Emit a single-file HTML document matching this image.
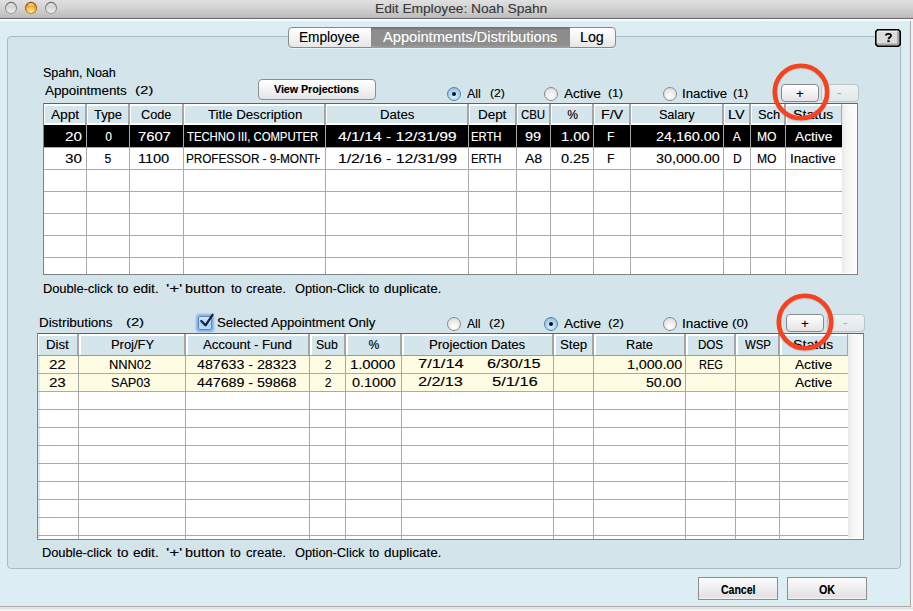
<!DOCTYPE html>
<html><head><meta charset="utf-8"><style>
html,body{margin:0;padding:0}
body{width:913px;height:611px;position:relative;overflow:hidden;background:#f2f2f2;font-family:"Liberation Sans",sans-serif}
.t{position:absolute;white-space:pre;line-height:20px;transform-origin:0 0;font-family:"Liberation Sans",sans-serif}

</style></head><body>
<div style='position:absolute;left:0px;top:0px;width:913px;height:18px;background:linear-gradient(#e0e0e0,#d2d2d2 45%,#c4c4c4 80%,#b9b9b9)'></div>
<div style='position:absolute;left:0px;top:18px;width:913px;height:1px;background:#6a6a6a'></div>
<div style='position:absolute;left:0px;top:19px;width:913px;height:2px;background:#f7fbfc'></div>
<svg style='position:absolute;left:0;top:0' width='62' height='18'>
<defs>
<linearGradient id='gr' x1='0' y1='0' x2='0' y2='1'><stop offset='0' stop-color='#c4c4c4'/><stop offset='0.5' stop-color='#d8d8d8'/><stop offset='1' stop-color='#f2f2f2'/></linearGradient>
<linearGradient id='grr' x1='0' y1='0' x2='0' y2='1'><stop offset='0' stop-color='#6e6e6e'/><stop offset='1' stop-color='#a8a8a8'/></linearGradient>
<radialGradient id='orf' cx='0.5' cy='0.85' r='0.8'><stop offset='0' stop-color='#fff4a8'/><stop offset='0.45' stop-color='#f8c850'/><stop offset='1' stop-color='#e07a18'/></radialGradient>
<linearGradient id='orr' x1='0' y1='0' x2='0' y2='1'><stop offset='0' stop-color='#8c5408'/><stop offset='1' stop-color='#c89028'/></linearGradient>
<linearGradient id='hl' x1='0' y1='0' x2='0' y2='1'><stop offset='0' stop-color='#fff' stop-opacity='0.9'/><stop offset='1' stop-color='#fff' stop-opacity='0'/></linearGradient>
</defs>
<circle cx='11' cy='8' r='5.6' fill='url(#gr)' stroke='url(#grr)' stroke-width='1.1'/>
<ellipse cx='11' cy='5.2' rx='3' ry='1.8' fill='url(#hl)' opacity='0.6'/>
<circle cx='31' cy='8' r='5.6' fill='url(#orf)' stroke='url(#orr)' stroke-width='1.1'/>
<ellipse cx='31' cy='4.9' rx='3' ry='1.7' fill='url(#hl)' opacity='0.85'/>
<circle cx='51' cy='8' r='5.6' fill='url(#gr)' stroke='url(#grr)' stroke-width='1.1'/>
<ellipse cx='51' cy='5.2' rx='3' ry='1.8' fill='url(#hl)' opacity='0.6'/>
</svg>
<div style='position:absolute;left:0px;top:21px;width:910px;height:585px;background:#dcedf3'></div>
<div style='position:absolute;left:910px;top:21px;width:1px;height:586px;background:#a9a9a9'></div>
<div style='position:absolute;left:0px;top:606px;width:911px;height:1px;background:#ababab'></div>
<div style='position:absolute;left:0px;top:607px;width:913px;height:1px;background:#e6e6e6'></div>
<div style='position:absolute;left:0px;top:608px;width:913px;height:1px;background:#dedede'></div>
<div style='position:absolute;left:7px;top:36px;width:892px;height:531px;background:#d3e5eb;border:1px solid #a9bbc1;border-radius:4px'></div>
<div style='position:absolute;left:288px;top:27px;width:326px;height:19px;background:linear-gradient(#ffffff,#f4f4f4 50%,#e6e6e6);border:1px solid #8a8a8a;border-radius:4px;box-shadow:0 1px 0 rgba(255,255,255,.5)'></div>
<div style='position:absolute;left:371px;top:27px;width:199px;height:21px;background:linear-gradient(#6e6e6e,#8c8c8c 15%,#8e8e8e 85%,#a0a0a0)'></div>
<svg style='position:absolute;left:875px;top:29px' width='26' height='18'>
<path d='M2.6 0.8 H23.4 L25.2 2.6 V15.4 L23.4 17.2 H2.6 L0.8 15.4 V2.6 Z' fill='#dcdcdc'/>
<rect x='1.5' y='1.5' width='23' height='1.2' fill='#f4f4f4'/>
<rect x='1.5' y='1.5' width='1.2' height='15' fill='#f0f0f0'/>
<rect x='22.2' y='2.5' width='2.3' height='13.5' fill='#a4a4a4'/>
<rect x='1.5' y='14.4' width='23' height='2.2' fill='#a8a8a8'/>
<path d='M2.6 0.8 H23.4 L25.2 2.6 V15.4 L23.4 17.2 H2.6 L0.8 15.4 V2.6 Z' fill='none' stroke='#000' stroke-width='1.6'/>
<path d='M10.9 6.6 C10.9 4.4 16.1 4.2 16.1 6.6 C16.1 8.2 13.5 8.4 13.5 10.3' fill='none' stroke='#000' stroke-width='1.9'/><rect x='12.3' y='11.3' width='2.4' height='1.8' fill='#000'/>
</svg>
<div style='position:absolute;left:258px;top:79px;width:116px;height:19px;background:linear-gradient(#ffffff,#f3f3f3 50%,#e5e5e5);border:1px solid #8e8e8e;border-radius:4px'></div>
<div style='position:absolute;left:447px;top:87px;width:12px;height:12px;background:radial-gradient(circle at 50% 70%,#d8f0ff,#9cc8ee 70%,#7aa8d8);border:1px solid #5a7ea8;border-radius:50%'></div><div style='position:absolute;left:452px;top:92px;width:4px;height:4px;background:#111;border-radius:50%'></div>
<div style='position:absolute;left:544px;top:87px;width:12px;height:12px;background:radial-gradient(circle at 50% 75%,#ffffff,#e4e4e4 70%,#d0d0d0);border:1px solid #8a8a8a;border-radius:50%'></div>
<div style='position:absolute;left:663px;top:87px;width:12px;height:12px;background:radial-gradient(circle at 50% 75%,#ffffff,#e4e4e4 70%,#d0d0d0);border:1px solid #8a8a8a;border-radius:50%'></div>
<div style='position:absolute;left:447px;top:317px;width:12px;height:12px;background:radial-gradient(circle at 50% 75%,#ffffff,#e4e4e4 70%,#d0d0d0);border:1px solid #8a8a8a;border-radius:50%'></div>
<div style='position:absolute;left:544px;top:317px;width:12px;height:12px;background:radial-gradient(circle at 50% 70%,#d8f0ff,#9cc8ee 70%,#7aa8d8);border:1px solid #5a7ea8;border-radius:50%'></div><div style='position:absolute;left:549px;top:322px;width:4px;height:4px;background:#111;border-radius:50%'></div>
<div style='position:absolute;left:663px;top:317px;width:12px;height:12px;background:radial-gradient(circle at 50% 75%,#ffffff,#e4e4e4 70%,#d0d0d0);border:1px solid #8a8a8a;border-radius:50%'></div>
<div style='position:absolute;left:781px;top:84px;width:36px;height:16px;background:linear-gradient(#ffffff,#f2f2f2 50%,#e4e4e4);border:1px solid #8a8a8a;border-radius:4px'></div>
<div style='position:absolute;left:821px;top:84px;width:36px;height:16px;background:linear-gradient(#eef3f5,#e2e8ea);border:1px solid #b8c4c8;border-radius:4px'></div>
<div style='position:absolute;left:786px;top:314px;width:36px;height:16px;background:linear-gradient(#ffffff,#f2f2f2 50%,#e4e4e4);border:1px solid #8a8a8a;border-radius:4px'></div>
<div style='position:absolute;left:827px;top:314px;width:36px;height:16px;background:linear-gradient(#eef3f5,#e2e8ea);border:1px solid #b8c4c8;border-radius:4px'></div>
<div style='position:absolute;left:198px;top:316px;width:12px;height:12px;background:linear-gradient(#d4ecfc,#a8d4f6 60%,#b8e0fa);border:1px solid #5a86c0;border-radius:2px;box-shadow:0 0 2px 1.5px #86b0ea'></div>
<svg style='position:absolute;left:196px;top:311px' width='20' height='20'><path d='M5.3 10 L9.5 14.3 L16.5 3.8' fill='none' stroke='#16243c' stroke-width='2.3' stroke-linecap='round' stroke-linejoin='round'/></svg>
<div style='position:absolute;left:43px;top:103px;width:813px;height:170px;background:#fff;border:1px solid #7a8488;border-top-color:#5c6468'></div>
<div style='position:absolute;left:44px;top:104px;width:798px;height:21px;background:#d5e5ec;box-shadow:inset 0 2px 0 #fff, inset 1px 0 0 #fff, inset 0 -2px 0 #fff'></div>
<div style='position:absolute;left:44px;top:125px;width:798px;height:23px;background:#000'></div>
<div style='position:absolute;left:85px;top:104px;width:2px;height:21px;background:#a6a6a6'></div>
<div style='position:absolute;left:87px;top:104px;width:1px;height:21px;background:#fff'></div>
<div style='position:absolute;left:86px;top:125px;width:1px;height:149px;background:#a8a8a8'></div>
<div style='position:absolute;left:128px;top:104px;width:2px;height:21px;background:#a6a6a6'></div>
<div style='position:absolute;left:130px;top:104px;width:1px;height:21px;background:#fff'></div>
<div style='position:absolute;left:129px;top:125px;width:1px;height:149px;background:#a8a8a8'></div>
<div style='position:absolute;left:182px;top:104px;width:2px;height:21px;background:#a6a6a6'></div>
<div style='position:absolute;left:184px;top:104px;width:1px;height:21px;background:#fff'></div>
<div style='position:absolute;left:183px;top:125px;width:1px;height:149px;background:#a8a8a8'></div>
<div style='position:absolute;left:324px;top:104px;width:2px;height:21px;background:#a6a6a6'></div>
<div style='position:absolute;left:326px;top:104px;width:1px;height:21px;background:#fff'></div>
<div style='position:absolute;left:325px;top:125px;width:1px;height:149px;background:#a8a8a8'></div>
<div style='position:absolute;left:467px;top:104px;width:2px;height:21px;background:#a6a6a6'></div>
<div style='position:absolute;left:469px;top:104px;width:1px;height:21px;background:#fff'></div>
<div style='position:absolute;left:468px;top:125px;width:1px;height:149px;background:#a8a8a8'></div>
<div style='position:absolute;left:515px;top:104px;width:2px;height:21px;background:#a6a6a6'></div>
<div style='position:absolute;left:517px;top:104px;width:1px;height:21px;background:#fff'></div>
<div style='position:absolute;left:516px;top:125px;width:1px;height:149px;background:#a8a8a8'></div>
<div style='position:absolute;left:549px;top:104px;width:2px;height:21px;background:#a6a6a6'></div>
<div style='position:absolute;left:551px;top:104px;width:1px;height:21px;background:#fff'></div>
<div style='position:absolute;left:550px;top:125px;width:1px;height:149px;background:#a8a8a8'></div>
<div style='position:absolute;left:592px;top:104px;width:2px;height:21px;background:#a6a6a6'></div>
<div style='position:absolute;left:594px;top:104px;width:1px;height:21px;background:#fff'></div>
<div style='position:absolute;left:593px;top:125px;width:1px;height:149px;background:#a8a8a8'></div>
<div style='position:absolute;left:629px;top:104px;width:2px;height:21px;background:#a6a6a6'></div>
<div style='position:absolute;left:631px;top:104px;width:1px;height:21px;background:#fff'></div>
<div style='position:absolute;left:630px;top:125px;width:1px;height:149px;background:#a8a8a8'></div>
<div style='position:absolute;left:722px;top:104px;width:2px;height:21px;background:#a6a6a6'></div>
<div style='position:absolute;left:724px;top:104px;width:1px;height:21px;background:#fff'></div>
<div style='position:absolute;left:723px;top:125px;width:1px;height:149px;background:#a8a8a8'></div>
<div style='position:absolute;left:749px;top:104px;width:2px;height:21px;background:#a6a6a6'></div>
<div style='position:absolute;left:751px;top:104px;width:1px;height:21px;background:#fff'></div>
<div style='position:absolute;left:750px;top:125px;width:1px;height:149px;background:#a8a8a8'></div>
<div style='position:absolute;left:784px;top:104px;width:2px;height:21px;background:#a6a6a6'></div>
<div style='position:absolute;left:786px;top:104px;width:1px;height:21px;background:#fff'></div>
<div style='position:absolute;left:785px;top:125px;width:1px;height:149px;background:#a8a8a8'></div>
<div style='position:absolute;left:841px;top:104px;width:1px;height:21px;background:#a8a8a8'></div>
<div style='position:absolute;left:44px;top:147px;width:798px;height:1px;background:#aaaaaa'></div>
<div style='position:absolute;left:44px;top:169px;width:798px;height:1px;background:#aaaaaa'></div>
<div style='position:absolute;left:44px;top:191px;width:798px;height:1px;background:#aaaaaa'></div>
<div style='position:absolute;left:44px;top:213px;width:798px;height:1px;background:#aaaaaa'></div>
<div style='position:absolute;left:44px;top:235px;width:798px;height:1px;background:#aaaaaa'></div>
<div style='position:absolute;left:44px;top:257px;width:798px;height:1px;background:#aaaaaa'></div>
<div style='position:absolute;left:842px;top:104px;width:15px;height:169px;background:linear-gradient(90deg,#e9e9e9,#f3f3f3 25%,#f9f9f9 60%,#fbfbfb 90%,#ffffff)'></div>
<div style='position:absolute;left:842px;top:104px;width:15px;height:1px;background:#fff'></div>
<div style='position:absolute;left:37px;top:333px;width:825px;height:205px;background:#fff;border:1px solid #7a8488;border-top-color:#5c6468'></div>
<div style='position:absolute;left:38px;top:334px;width:810px;height:21px;background:#d5e5ec;box-shadow:inset 0 2px 0 #fff, inset 1px 0 0 #fff'></div>
<div style='position:absolute;left:38px;top:355px;width:810px;height:1px;background:#9a9a9a'></div>
<div style='position:absolute;left:38px;top:356px;width:810px;height:17px;background:#fffce4'></div>
<div style='position:absolute;left:38px;top:374px;width:810px;height:17px;background:#fffce4'></div>
<div style='position:absolute;left:38px;top:356px;width:2px;height:182px;background:#dbedf3'></div>
<div style='position:absolute;left:77px;top:334px;width:2px;height:21px;background:#a6a6a6'></div>
<div style='position:absolute;left:79px;top:334px;width:2px;height:21px;background:#fff'></div>
<div style='position:absolute;left:78px;top:356px;width:1px;height:183px;background:#a8a8a8'></div>
<div style='position:absolute;left:184px;top:334px;width:2px;height:21px;background:#a6a6a6'></div>
<div style='position:absolute;left:186px;top:334px;width:2px;height:21px;background:#fff'></div>
<div style='position:absolute;left:185px;top:356px;width:1px;height:183px;background:#a8a8a8'></div>
<div style='position:absolute;left:308px;top:334px;width:2px;height:21px;background:#a6a6a6'></div>
<div style='position:absolute;left:310px;top:334px;width:2px;height:21px;background:#fff'></div>
<div style='position:absolute;left:309px;top:356px;width:1px;height:183px;background:#a8a8a8'></div>
<div style='position:absolute;left:344px;top:334px;width:2px;height:21px;background:#a6a6a6'></div>
<div style='position:absolute;left:346px;top:334px;width:2px;height:21px;background:#fff'></div>
<div style='position:absolute;left:345px;top:356px;width:1px;height:183px;background:#a8a8a8'></div>
<div style='position:absolute;left:400px;top:334px;width:2px;height:21px;background:#a6a6a6'></div>
<div style='position:absolute;left:402px;top:334px;width:2px;height:21px;background:#fff'></div>
<div style='position:absolute;left:401px;top:356px;width:1px;height:183px;background:#a8a8a8'></div>
<div style='position:absolute;left:552px;top:334px;width:2px;height:21px;background:#a6a6a6'></div>
<div style='position:absolute;left:554px;top:334px;width:2px;height:21px;background:#fff'></div>
<div style='position:absolute;left:553px;top:356px;width:1px;height:183px;background:#a8a8a8'></div>
<div style='position:absolute;left:592px;top:334px;width:2px;height:21px;background:#a6a6a6'></div>
<div style='position:absolute;left:594px;top:334px;width:2px;height:21px;background:#fff'></div>
<div style='position:absolute;left:593px;top:356px;width:1px;height:183px;background:#a8a8a8'></div>
<div style='position:absolute;left:684px;top:334px;width:2px;height:21px;background:#a6a6a6'></div>
<div style='position:absolute;left:686px;top:334px;width:2px;height:21px;background:#fff'></div>
<div style='position:absolute;left:685px;top:356px;width:1px;height:183px;background:#a8a8a8'></div>
<div style='position:absolute;left:734px;top:334px;width:2px;height:21px;background:#a6a6a6'></div>
<div style='position:absolute;left:736px;top:334px;width:2px;height:21px;background:#fff'></div>
<div style='position:absolute;left:735px;top:356px;width:1px;height:183px;background:#a8a8a8'></div>
<div style='position:absolute;left:778px;top:334px;width:2px;height:21px;background:#a6a6a6'></div>
<div style='position:absolute;left:780px;top:334px;width:2px;height:21px;background:#fff'></div>
<div style='position:absolute;left:779px;top:356px;width:1px;height:183px;background:#a8a8a8'></div>
<div style='position:absolute;left:847px;top:334px;width:1px;height:21px;background:#a8a8a8'></div>
<div style='position:absolute;left:38px;top:373px;width:810px;height:1px;background:#aaaaaa'></div>
<div style='position:absolute;left:38px;top:391px;width:810px;height:1px;background:#aaaaaa'></div>
<div style='position:absolute;left:38px;top:409px;width:810px;height:1px;background:#aaaaaa'></div>
<div style='position:absolute;left:38px;top:427px;width:810px;height:1px;background:#aaaaaa'></div>
<div style='position:absolute;left:38px;top:445px;width:810px;height:1px;background:#aaaaaa'></div>
<div style='position:absolute;left:38px;top:463px;width:810px;height:1px;background:#aaaaaa'></div>
<div style='position:absolute;left:38px;top:481px;width:810px;height:1px;background:#aaaaaa'></div>
<div style='position:absolute;left:38px;top:499px;width:810px;height:1px;background:#aaaaaa'></div>
<div style='position:absolute;left:38px;top:517px;width:810px;height:1px;background:#aaaaaa'></div>
<div style='position:absolute;left:38px;top:535px;width:810px;height:1px;background:#aaaaaa'></div>
<div style='position:absolute;left:848px;top:334px;width:15px;height:204px;background:linear-gradient(90deg,#e9e9e9,#f3f3f3 25%,#f9f9f9 60%,#fbfbfb 90%,#ffffff)'></div>
<div style='position:absolute;left:848px;top:334px;width:15px;height:1px;background:#fff'></div>
<div style='position:absolute;left:698px;top:577px;width:78px;height:21px;background:linear-gradient(#fbfbfb,#eeeeee 50%,#e2e2e2 90%,#f4f4f4);border:1px solid #8e8e8e'></div>
<div style='position:absolute;left:787px;top:577px;width:78px;height:21px;background:linear-gradient(#fbfbfb,#eeeeee 50%,#e2e2e2 90%,#f4f4f4);border:1px solid #8e8e8e'></div>
<svg style='position:absolute;z-index:10;left:768.5px;top:59.5px' width='64' height='64'><circle cx='32' cy='33' r='26.2' fill='none' stroke='rgba(0,0,0,0.10)' stroke-width='5'/><circle cx='32' cy='32' r='26.2' fill='none' stroke='#f6421f' stroke-width='4.6'/></svg>
<svg style='position:absolute;z-index:10;left:773.3px;top:290.1px' width='64' height='64'><circle cx='32' cy='33' r='26.2' fill='none' stroke='rgba(0,0,0,0.10)' stroke-width='5'/><circle cx='32' cy='32' r='26.2' fill='none' stroke='#f6421f' stroke-width='4.6'/></svg>
<div class='t' style='left:375.38px;top:-1.08px;font-size:13.5px;font-weight:400;color:#3a3a3a;text-shadow:0.3px 0 0 rgba(58,58,58,0.35);transform:scaleX(1.0155)'>Edit Employee: Noah Spahn</div>
<div class='t' style='left:298.73px;top:26.75px;font-size:14px;font-weight:400;color:#000;text-shadow:0.3px 0 0 rgba(0,0,0,0.35);transform:scaleX(0.9721)'>Employee</div>
<div class='t' style='left:383.40px;top:26.75px;font-size:14px;font-weight:400;color:#fff;text-shadow:0.3px 0 0 rgba(255,255,255,0.35);transform:scaleX(1.0458)'>Appointments/Distributions</div>
<div class='t' style='left:579.99px;top:26.75px;font-size:14px;font-weight:400;color:#000;text-shadow:0.3px 0 0 rgba(0,0,0,0.35);transform:scaleX(1.0136)'>Log</div>
<div class='t' style='left:43.26px;top:62.94px;font-size:12px;font-weight:400;color:#000;text-shadow:0.3px 0 0 rgba(0,0,0,0.35);transform:scaleX(1.0377)'>Spahn, Noah</div>
<div class='t' style='left:45.20px;top:81.44px;font-size:12px;font-weight:400;color:#000;text-shadow:0.3px 0 0 rgba(0,0,0,0.35);transform:scaleX(1.1137)'>Appointments</div>
<div class='t' style='left:135.34px;top:80.49px;font-size:11px;font-weight:400;color:#000;text-shadow:0.3px 0 0 rgba(0,0,0,0.35);transform:scaleX(1.3583)'>(2)</div>
<div class='t' style='left:274.20px;top:79.19px;font-size:11px;font-weight:700;color:#000;text-shadow:0.3px 0 0 rgba(0,0,0,0.35);transform:scaleX(0.9659)'>View Projections</div>
<div class='t' style='left:467.20px;top:84.14px;font-size:12px;font-weight:400;color:#000;text-shadow:0.3px 0 0 rgba(0,0,0,0.35);transform:scaleX(1.0231)'>All</div>
<div class='t' style='left:489.70px;top:83.19px;font-size:11px;font-weight:400;color:#000;text-shadow:0.3px 0 0 rgba(0,0,0,0.35);transform:scaleX(1.1000)'>(2)</div>
<div class='t' style='left:564.40px;top:84.14px;font-size:12px;font-weight:400;color:#000;text-shadow:0.3px 0 0 rgba(0,0,0,0.35);transform:scaleX(1.1281)'>Active</div>
<div class='t' style='left:608.49px;top:83.19px;font-size:11px;font-weight:400;color:#000;text-shadow:0.3px 0 0 rgba(0,0,0,0.35);transform:scaleX(1.1083)'>(1)</div>
<div class='t' style='left:682.21px;top:84.14px;font-size:12px;font-weight:400;color:#000;text-shadow:0.3px 0 0 rgba(0,0,0,0.35);transform:scaleX(1.0875)'>Inactive</div>
<div class='t' style='left:732.58px;top:83.19px;font-size:11px;font-weight:400;color:#000;text-shadow:0.3px 0 0 rgba(0,0,0,0.35);transform:scaleX(1.1167)'>(1)</div>
<div class='t' style='left:795.60px;top:83.64px;font-size:12px;font-weight:400;color:#000;text-shadow:0.3px 0 0 rgba(0,0,0,0.35);transform:scaleX(1.1000)'>+</div>
<div class='t' style='left:837.30px;top:82.64px;font-size:12px;font-weight:400;color:#aaa;text-shadow:0.3px 0 0 rgba(170,170,170,0.35);transform:scaleX(1.1000)'>-</div>
<div class='t' style='left:51.00px;top:104.84px;font-size:12px;font-weight:400;color:#000;text-shadow:0.3px 0 0 rgba(0,0,0,0.35);transform:scaleX(1.1360)'>Appt</div>
<div class='t' style='left:94.30px;top:104.84px;font-size:12px;font-weight:400;color:#000;text-shadow:0.3px 0 0 rgba(0,0,0,0.35);transform:scaleX(1.0731)'>Type</div>
<div class='t' style='left:141.44px;top:104.84px;font-size:12px;font-weight:400;color:#000;text-shadow:0.3px 0 0 rgba(0,0,0,0.35);transform:scaleX(1.0556)'>Code</div>
<div class='t' style='left:208.20px;top:104.84px;font-size:12px;font-weight:400;color:#000;text-shadow:0.3px 0 0 rgba(0,0,0,0.35);transform:scaleX(1.1012)'>Title Description</div>
<div class='t' style='left:379.81px;top:104.84px;font-size:12px;font-weight:400;color:#000;text-shadow:0.3px 0 0 rgba(0,0,0,0.35);transform:scaleX(1.0933)'>Dates</div>
<div class='t' style='left:478.08px;top:104.84px;font-size:12px;font-weight:400;color:#000;text-shadow:0.3px 0 0 rgba(0,0,0,0.35);transform:scaleX(1.1167)'>Dept</div>
<div class='t' style='left:521.45px;top:104.84px;font-size:12px;font-weight:400;color:#000;text-shadow:0.3px 0 0 rgba(0,0,0,0.35);transform:scaleX(0.9500)'>CBU</div>
<div class='t' style='left:567.25px;top:104.84px;font-size:12px;font-weight:400;color:#000;text-shadow:0.3px 0 0 rgba(0,0,0,0.35);transform:scaleX(1.0000)'>%</div>
<div class='t' style='left:601.32px;top:104.84px;font-size:12px;font-weight:400;color:#000;text-shadow:0.3px 0 0 rgba(0,0,0,0.35);transform:scaleX(1.1833)'>F/V</div>
<div class='t' style='left:659.25px;top:104.84px;font-size:12px;font-weight:400;color:#000;text-shadow:0.3px 0 0 rgba(0,0,0,0.35);transform:scaleX(1.0455)'>Salary</div>
<div class='t' style='left:728.21px;top:104.84px;font-size:12px;font-weight:400;color:#000;text-shadow:0.3px 0 0 rgba(0,0,0,0.35);transform:scaleX(1.1923)'>LV</div>
<div class='t' style='left:757.74px;top:104.84px;font-size:12px;font-weight:400;color:#000;text-shadow:0.3px 0 0 rgba(0,0,0,0.35);transform:scaleX(1.0632)'>Sch</div>
<div class='t' style='left:792.82px;top:104.84px;font-size:12px;font-weight:400;color:#000;text-shadow:0.3px 0 0 rgba(0,0,0,0.35);transform:scaleX(1.1818)'>Status</div>
<div class='t' style='left:65.34px;top:126.54px;font-size:12px;font-weight:400;color:#fff;text-shadow:0.3px 0 0 rgba(255,255,255,0.35);transform:scaleX(1.2583)'>20</div>
<div class='t' style='left:105.20px;top:126.54px;font-size:12px;font-weight:400;color:#fff;text-shadow:0.3px 0 0 rgba(255,255,255,0.35);transform:scaleX(1.0000)'>0</div>
<div class='t' style='left:137.77px;top:126.54px;font-size:12px;font-weight:400;color:#fff;text-shadow:0.3px 0 0 rgba(255,255,255,0.35);transform:scaleX(1.2280)'>7607</div>
<div class='t' style='left:187.20px;top:126.54px;font-size:12px;font-weight:400;color:#fff;text-shadow:0.3px 0 0 rgba(255,255,255,0.35);transform:scaleX(0.9410)'>TECHNO III, COMPUTER</div>
<div class='t' style='left:338.40px;top:126.54px;font-size:12px;font-weight:400;color:#fff;text-shadow:0.3px 0 0 rgba(255,255,255,0.35);transform:scaleX(1.3067)'>4/1/14 - 12/31/99</div>
<div class='t' style='left:471.36px;top:126.54px;font-size:12px;font-weight:400;color:#fff;text-shadow:0.3px 0 0 rgba(255,255,255,0.35);transform:scaleX(0.9387)'>ERTH</div>
<div class='t' style='left:524.80px;top:126.54px;font-size:12px;font-weight:400;color:#fff;text-shadow:0.3px 0 0 rgba(255,255,255,0.35);transform:scaleX(1.2000)'>99</div>
<div class='t' style='left:560.78px;top:126.54px;font-size:12px;font-weight:400;color:#fff;text-shadow:0.3px 0 0 rgba(255,255,255,0.35);transform:scaleX(1.2182)'>1.00</div>
<div class='t' style='left:607.10px;top:126.54px;font-size:12px;font-weight:400;color:#fff;text-shadow:0.3px 0 0 rgba(255,255,255,0.35);transform:scaleX(1.0000)'>F</div>
<div class='t' style='left:656.01px;top:126.54px;font-size:12px;font-weight:400;color:#fff;text-shadow:0.3px 0 0 rgba(255,255,255,0.35);transform:scaleX(1.1923)'>24,160.00</div>
<div class='t' style='left:732.75px;top:126.54px;font-size:12px;font-weight:400;color:#fff;text-shadow:0.3px 0 0 rgba(255,255,255,0.35);transform:scaleX(1.0000)'>A</div>
<div class='t' style='left:757.29px;top:126.54px;font-size:12px;font-weight:400;color:#fff;text-shadow:0.3px 0 0 rgba(255,255,255,0.35);transform:scaleX(1.0056)'>MO</div>
<div class='t' style='left:795.20px;top:126.54px;font-size:12px;font-weight:400;color:#fff;text-shadow:0.3px 0 0 rgba(255,255,255,0.35);transform:scaleX(1.1406)'>Active</div>
<div class='t' style='left:65.34px;top:148.54px;font-size:12px;font-weight:400;color:#000;text-shadow:0.3px 0 0 rgba(0,0,0,0.35);transform:scaleX(1.2583)'>30</div>
<div class='t' style='left:104.50px;top:148.54px;font-size:12px;font-weight:400;color:#000;text-shadow:0.3px 0 0 rgba(0,0,0,0.35);transform:scaleX(1.0000)'>5</div>
<div class='t' style='left:138.29px;top:148.54px;font-size:12px;font-weight:400;color:#000;text-shadow:0.3px 0 0 rgba(0,0,0,0.35);transform:scaleX(1.2080)'>1100</div>
<div style='position:absolute;left:0;top:0;width:320px;height:611px;overflow:hidden'><div class='t' style='left:186.23px;top:148.54px;font-size:12px;font-weight:400;color:#000;text-shadow:0.3px 0 0 rgba(0,0,0,0.35);transform:scaleX(0.9734)'>PROFESSOR - 9-MONTH</div></div>
<div class='t' style='left:338.09px;top:148.54px;font-size:12px;font-weight:400;color:#000;text-shadow:0.3px 0 0 rgba(0,0,0,0.35);transform:scaleX(1.3101)'>1/2/16 - 12/31/99</div>
<div class='t' style='left:471.36px;top:148.54px;font-size:12px;font-weight:400;color:#000;text-shadow:0.3px 0 0 rgba(0,0,0,0.35);transform:scaleX(0.9387)'>ERTH</div>
<div class='t' style='left:525.00px;top:148.54px;font-size:12px;font-weight:400;color:#000;text-shadow:0.3px 0 0 rgba(0,0,0,0.35);transform:scaleX(1.1643)'>A8</div>
<div class='t' style='left:561.00px;top:148.54px;font-size:12px;font-weight:400;color:#000;text-shadow:0.3px 0 0 rgba(0,0,0,0.35);transform:scaleX(1.2087)'>0.25</div>
<div class='t' style='left:607.10px;top:148.54px;font-size:12px;font-weight:400;color:#000;text-shadow:0.3px 0 0 rgba(0,0,0,0.35);transform:scaleX(1.0000)'>F</div>
<div class='t' style='left:656.01px;top:148.54px;font-size:12px;font-weight:400;color:#000;text-shadow:0.3px 0 0 rgba(0,0,0,0.35);transform:scaleX(1.1923)'>30,000.00</div>
<div class='t' style='left:733.00px;top:148.54px;font-size:12px;font-weight:400;color:#000;text-shadow:0.3px 0 0 rgba(0,0,0,0.35);transform:scaleX(1.0000)'>D</div>
<div class='t' style='left:757.29px;top:148.54px;font-size:12px;font-weight:400;color:#000;text-shadow:0.3px 0 0 rgba(0,0,0,0.35);transform:scaleX(1.0056)'>MO</div>
<div class='t' style='left:790.20px;top:148.54px;font-size:12px;font-weight:400;color:#000;text-shadow:0.3px 0 0 rgba(0,0,0,0.35);transform:scaleX(1.1000)'>Inactive</div>
<div class='t' style='left:42.53px;top:279.14px;font-size:12px;font-weight:400;color:#000;text-shadow:0.3px 0 0 rgba(0,0,0,0.35);transform:scaleX(1.0672)'>Double-click</div>
<div class='t' style='left:116.90px;top:279.14px;font-size:12px;font-weight:400;color:#000;text-shadow:0.3px 0 0 rgba(0,0,0,0.35);transform:scaleX(1.1400)'>to</div>
<div class='t' style='left:133.30px;top:279.14px;font-size:12px;font-weight:400;color:#000;text-shadow:0.3px 0 0 rgba(0,0,0,0.35);transform:scaleX(1.1318)'>edit.</div>
<div class='t' style='left:165.80px;top:279.14px;font-size:12px;font-weight:400;color:#000;text-shadow:0.3px 0 0 rgba(0,0,0,0.35);transform:scaleX(1.4000)'>'+'</div>
<div class='t' style='left:185.31px;top:279.14px;font-size:12px;font-weight:400;color:#000;text-shadow:0.3px 0 0 rgba(0,0,0,0.35);transform:scaleX(1.1937)'>button</div>
<div class='t' style='left:230.50px;top:279.14px;font-size:12px;font-weight:400;color:#000;text-shadow:0.3px 0 0 rgba(0,0,0,0.35);transform:scaleX(1.0700)'>to</div>
<div class='t' style='left:246.10px;top:279.14px;font-size:12px;font-weight:400;color:#000;text-shadow:0.3px 0 0 rgba(0,0,0,0.35);transform:scaleX(1.0889)'>create.</div>
<div class='t' style='left:294.80px;top:279.14px;font-size:12px;font-weight:400;color:#000;text-shadow:0.3px 0 0 rgba(0,0,0,0.35);transform:scaleX(1.0631)'>Option-Click</div>
<div class='t' style='left:369.00px;top:279.14px;font-size:12px;font-weight:400;color:#000;text-shadow:0.3px 0 0 rgba(0,0,0,0.35);transform:scaleX(1.0100)'>to</div>
<div class='t' style='left:384.20px;top:279.14px;font-size:12px;font-weight:400;color:#000;text-shadow:0.3px 0 0 rgba(0,0,0,0.35);transform:scaleX(1.1160)'>duplicate.</div>
<div class='t' style='left:39.09px;top:313.14px;font-size:12px;font-weight:400;color:#000;text-shadow:0.3px 0 0 rgba(0,0,0,0.35);transform:scaleX(1.1108)'>Distributions</div>
<div class='t' style='left:125.56px;top:312.19px;font-size:11px;font-weight:400;color:#000;text-shadow:0.3px 0 0 rgba(0,0,0,0.35);transform:scaleX(1.3417)'>(2)</div>
<div class='t' style='left:216.51px;top:312.84px;font-size:12px;font-weight:400;color:#000;text-shadow:0.3px 0 0 rgba(0,0,0,0.35);transform:scaleX(1.0938)'>Selected Appointment Only</div>
<div class='t' style='left:467.40px;top:314.14px;font-size:12px;font-weight:400;color:#000;text-shadow:0.3px 0 0 rgba(0,0,0,0.35);transform:scaleX(1.0077)'>All</div>
<div class='t' style='left:489.13px;top:313.19px;font-size:11px;font-weight:400;color:#000;text-shadow:0.3px 0 0 rgba(0,0,0,0.35);transform:scaleX(1.1667)'>(2)</div>
<div class='t' style='left:564.40px;top:314.14px;font-size:12px;font-weight:400;color:#000;text-shadow:0.3px 0 0 rgba(0,0,0,0.35);transform:scaleX(1.1313)'>Active</div>
<div class='t' style='left:608.03px;top:313.19px;font-size:11px;font-weight:400;color:#000;text-shadow:0.3px 0 0 rgba(0,0,0,0.35);transform:scaleX(1.1750)'>(2)</div>
<div class='t' style='left:681.78px;top:314.14px;font-size:12px;font-weight:400;color:#000;text-shadow:0.3px 0 0 rgba(0,0,0,0.35);transform:scaleX(1.1150)'>Inactive</div>
<div class='t' style='left:732.00px;top:313.19px;font-size:11px;font-weight:400;color:#000;text-shadow:0.3px 0 0 rgba(0,0,0,0.35);transform:scaleX(1.2000)'>(0)</div>
<div class='t' style='left:800.60px;top:313.64px;font-size:12px;font-weight:400;color:#000;text-shadow:0.3px 0 0 rgba(0,0,0,0.35);transform:scaleX(1.1000)'>+</div>
<div class='t' style='left:843.30px;top:312.64px;font-size:12px;font-weight:400;color:#aaa;text-shadow:0.3px 0 0 rgba(170,170,170,0.35);transform:scaleX(1.1000)'>-</div>
<div class='t' style='left:46.00px;top:335.14px;font-size:12px;font-weight:400;color:#000;text-shadow:0.3px 0 0 rgba(0,0,0,0.35);transform:scaleX(1.1000)'>Dist</div>
<div class='t' style='left:110.83px;top:335.14px;font-size:12px;font-weight:400;color:#000;text-shadow:0.3px 0 0 rgba(0,0,0,0.35);transform:scaleX(1.0744)'>Proj/FY</div>
<div class='t' style='left:203.40px;top:335.14px;font-size:12px;font-weight:400;color:#000;text-shadow:0.3px 0 0 rgba(0,0,0,0.35);transform:scaleX(1.0926)'>Account - Fund</div>
<div class='t' style='left:316.29px;top:335.14px;font-size:12px;font-weight:400;color:#000;text-shadow:0.3px 0 0 rgba(0,0,0,0.35);transform:scaleX(1.0150)'>Sub</div>
<div class='t' style='left:368.60px;top:335.14px;font-size:12px;font-weight:400;color:#000;text-shadow:0.3px 0 0 rgba(0,0,0,0.35);transform:scaleX(1.0000)'>%</div>
<div class='t' style='left:428.91px;top:335.14px;font-size:12px;font-weight:400;color:#000;text-shadow:0.3px 0 0 rgba(0,0,0,0.35);transform:scaleX(1.0920)'>Projection Dates</div>
<div class='t' style='left:560.40px;top:335.14px;font-size:12px;font-weight:400;color:#000;text-shadow:0.3px 0 0 rgba(0,0,0,0.35);transform:scaleX(1.0957)'>Step</div>
<div class='t' style='left:625.54px;top:335.14px;font-size:12px;font-weight:400;color:#000;text-shadow:0.3px 0 0 rgba(0,0,0,0.35);transform:scaleX(1.0583)'>Rate</div>
<div class='t' style='left:697.64px;top:335.14px;font-size:12px;font-weight:400;color:#000;text-shadow:0.3px 0 0 rgba(0,0,0,0.35);transform:scaleX(0.9640)'>DOS</div>
<div class='t' style='left:745.20px;top:335.14px;font-size:12px;font-weight:400;color:#000;text-shadow:0.3px 0 0 rgba(0,0,0,0.35);transform:scaleX(0.9444)'>WSP</div>
<div class='t' style='left:792.82px;top:335.14px;font-size:12px;font-weight:400;color:#000;text-shadow:0.3px 0 0 rgba(0,0,0,0.35);transform:scaleX(1.1818)'>Status</div>
<div class='t' style='left:48.55px;top:354.84px;font-size:12px;font-weight:400;color:#000;text-shadow:0.3px 0 0 rgba(0,0,0,0.35);transform:scaleX(1.2500)'>22</div>
<div class='t' style='left:109.13px;top:354.84px;font-size:12px;font-weight:400;color:#000;text-shadow:0.3px 0 0 rgba(0,0,0,0.35);transform:scaleX(1.0684)'>NNN02</div>
<div class='t' style='left:196.80px;top:354.84px;font-size:12px;font-weight:400;color:#000;text-shadow:0.3px 0 0 rgba(0,0,0,0.35);transform:scaleX(1.1810)'>487633 - 28323</div>
<div class='t' style='left:324.65px;top:354.84px;font-size:12px;font-weight:400;color:#000;text-shadow:0.3px 0 0 rgba(0,0,0,0.35);transform:scaleX(1.0000)'>2</div>
<div class='t' style='left:350.27px;top:354.84px;font-size:12px;font-weight:400;color:#000;text-shadow:0.3px 0 0 rgba(0,0,0,0.35);transform:scaleX(1.2286)'>1.0000</div>
<div class='t' style='left:417.73px;top:353.94px;font-size:12px;font-weight:400;color:#000;text-shadow:0.3px 0 0 rgba(0,0,0,0.35);transform:scaleX(1.3687)'>7/1/14</div>
<div class='t' style='left:487.26px;top:353.94px;font-size:12px;font-weight:400;color:#000;text-shadow:0.3px 0 0 rgba(0,0,0,0.35);transform:scaleX(1.3359)'>6/30/15</div>
<div class='t' style='left:627.12px;top:354.84px;font-size:12px;font-weight:400;color:#000;text-shadow:0.3px 0 0 rgba(0,0,0,0.35);transform:scaleX(1.1800)'>1,000.00</div>
<div class='t' style='left:699.09px;top:354.84px;font-size:12px;font-weight:400;color:#000;text-shadow:0.3px 0 0 rgba(0,0,0,0.35);transform:scaleX(0.9125)'>REG</div>
<div class='t' style='left:795.20px;top:354.84px;font-size:12px;font-weight:400;color:#000;text-shadow:0.3px 0 0 rgba(0,0,0,0.35);transform:scaleX(1.1375)'>Active</div>
<div class='t' style='left:48.55px;top:372.74px;font-size:12px;font-weight:400;color:#000;text-shadow:0.3px 0 0 rgba(0,0,0,0.35);transform:scaleX(1.2500)'>23</div>
<div class='t' style='left:110.65px;top:372.74px;font-size:12px;font-weight:400;color:#000;text-shadow:0.3px 0 0 rgba(0,0,0,0.35);transform:scaleX(1.0528)'>SAP03</div>
<div class='t' style='left:196.80px;top:372.74px;font-size:12px;font-weight:400;color:#000;text-shadow:0.3px 0 0 rgba(0,0,0,0.35);transform:scaleX(1.1810)'>447689 - 59868</div>
<div class='t' style='left:324.65px;top:372.74px;font-size:12px;font-weight:400;color:#000;text-shadow:0.3px 0 0 rgba(0,0,0,0.35);transform:scaleX(1.0000)'>2</div>
<div class='t' style='left:351.50px;top:372.74px;font-size:12px;font-weight:400;color:#000;text-shadow:0.3px 0 0 rgba(0,0,0,0.35);transform:scaleX(1.1944)'>0.1000</div>
<div class='t' style='left:417.76px;top:371.84px;font-size:12px;font-weight:400;color:#000;text-shadow:0.3px 0 0 rgba(0,0,0,0.35);transform:scaleX(1.3406)'>2/2/13</div>
<div class='t' style='left:491.63px;top:371.84px;font-size:12px;font-weight:400;color:#000;text-shadow:0.3px 0 0 rgba(0,0,0,0.35);transform:scaleX(1.3687)'>5/1/16</div>
<div class='t' style='left:646.23px;top:372.74px;font-size:12px;font-weight:400;color:#000;text-shadow:0.3px 0 0 rgba(0,0,0,0.35);transform:scaleX(1.1724)'>50.00</div>
<div class='t' style='left:795.20px;top:372.74px;font-size:12px;font-weight:400;color:#000;text-shadow:0.3px 0 0 rgba(0,0,0,0.35);transform:scaleX(1.1375)'>Active</div>
<div class='t' style='left:42.33px;top:542.94px;font-size:12px;font-weight:400;color:#000;text-shadow:0.3px 0 0 rgba(0,0,0,0.35);transform:scaleX(1.0672)'>Double-click</div>
<div class='t' style='left:116.70px;top:542.94px;font-size:12px;font-weight:400;color:#000;text-shadow:0.3px 0 0 rgba(0,0,0,0.35);transform:scaleX(1.1400)'>to</div>
<div class='t' style='left:133.10px;top:542.94px;font-size:12px;font-weight:400;color:#000;text-shadow:0.3px 0 0 rgba(0,0,0,0.35);transform:scaleX(1.1318)'>edit.</div>
<div class='t' style='left:165.60px;top:542.94px;font-size:12px;font-weight:400;color:#000;text-shadow:0.3px 0 0 rgba(0,0,0,0.35);transform:scaleX(1.4000)'>'+'</div>
<div class='t' style='left:185.11px;top:542.94px;font-size:12px;font-weight:400;color:#000;text-shadow:0.3px 0 0 rgba(0,0,0,0.35);transform:scaleX(1.1937)'>button</div>
<div class='t' style='left:230.30px;top:542.94px;font-size:12px;font-weight:400;color:#000;text-shadow:0.3px 0 0 rgba(0,0,0,0.35);transform:scaleX(1.0700)'>to</div>
<div class='t' style='left:245.90px;top:542.94px;font-size:12px;font-weight:400;color:#000;text-shadow:0.3px 0 0 rgba(0,0,0,0.35);transform:scaleX(1.0889)'>create.</div>
<div class='t' style='left:294.60px;top:542.94px;font-size:12px;font-weight:400;color:#000;text-shadow:0.3px 0 0 rgba(0,0,0,0.35);transform:scaleX(1.0631)'>Option-Click</div>
<div class='t' style='left:368.80px;top:542.94px;font-size:12px;font-weight:400;color:#000;text-shadow:0.3px 0 0 rgba(0,0,0,0.35);transform:scaleX(1.0100)'>to</div>
<div class='t' style='left:384.00px;top:542.94px;font-size:12px;font-weight:400;color:#000;text-shadow:0.3px 0 0 rgba(0,0,0,0.35);transform:scaleX(1.1160)'>duplicate.</div>
<div class='t' style='left:720.60px;top:579.94px;font-size:12px;font-weight:700;color:#000;text-shadow:0.3px 0 0 rgba(0,0,0,0.35);transform:scaleX(0.8744)'>Cancel</div>
<div class='t' style='left:819.00px;top:579.94px;font-size:12px;font-weight:700;color:#000;text-shadow:0.3px 0 0 rgba(0,0,0,0.35);transform:scaleX(0.8889)'>OK</div>
</body></html>
